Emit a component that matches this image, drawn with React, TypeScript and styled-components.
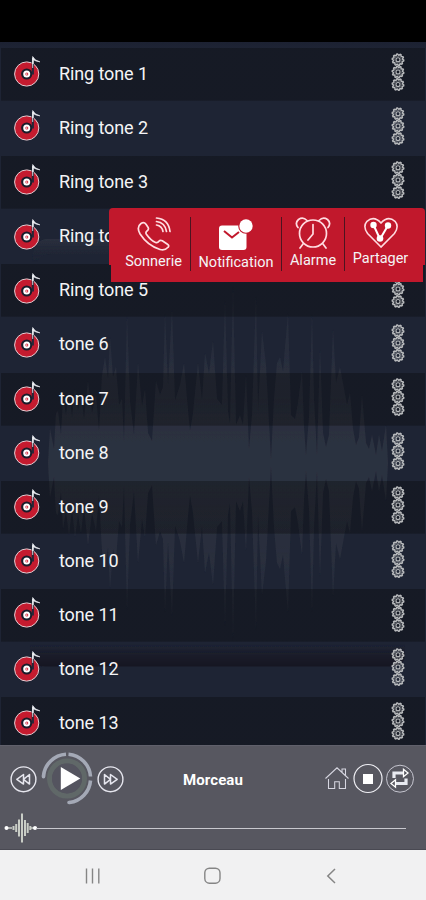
import React from "react";
import styled, { createGlobalStyle } from "styled-components";

const GlobalStyle = createGlobalStyle`
  * { box-sizing: border-box; }
  body { margin: 0; background: #1e2434; font-family: Roboto, "Open Sans", sans-serif; }
`;

const Phone = styled.div`
  display: flex;
  flex-direction: column;
  width: 426px;
  height: 900px;
  overflow: hidden;
  color: #f4f4f6;
`;

const StatusBar = styled.header`
  flex: 0 0 42px;
  background: #000;
`;

const Tones = styled.main`
  position: relative;
  flex: 0 0 703px;
  overflow: hidden;
  padding: 6px 1px 0;
  background: linear-gradient(#1c2132 0, #1e2434 7px);
`;

const Backdrop = styled.svg`
  position: absolute;
  inset: 0;
`;

const ToneList = styled.ul`
  position: relative;
  margin: 0;
  padding: 0;
  list-style: none;
`;

const ToneRow = styled.li<{ $dark: boolean }>`
  display: flex;
  align-items: flex-start;
  height: 54.1px;
  padding: 5.3px 19px 0 11px;
  background: ${(p) =>
    p.$dark
      ? "linear-gradient(rgba(3, 3, 2, 0.3), rgba(3, 3, 2, 0.3)) 0 0 / 100% 52.7px no-repeat"
      : "none"};
`;

const ToneName = styled.span`
  flex: 1;
  margin-left: 15px;
  padding-top: 8.7px;
  font-size: 18px;
  line-height: 24px;
  letter-spacing: -0.1px;
`;

const ActionMenu = styled.nav`
  position: absolute;
  left: 109px;
  top: 166px;
  display: flex;
  width: 316px;
  height: 74px;
  padding-top: 9px;
  border-radius: 4px 4px 0 0;
  background:
    linear-gradient(#c1182c, #c1182c) 0 0 / 316px 57px no-repeat,
    linear-gradient(#c1182c, #c1182c) 2px 0 / 312px 74px no-repeat;
`;

const Action = styled.div<{ $width: number; $inset?: number; $drop?: number }>`
  display: flex;
  flex-direction: column;
  align-items: center;
  width: ${(p) => p.$width}px;
  height: 54px;
  padding-left: ${(p) => p.$inset ?? 0}px;
  & + & { border-left: 1px solid #4c1420; }
  svg { display: block; flex: none; }
  span {
    margin-top: ${(p) => p.$drop ?? 0}px;
    font-size: 14.5px;
    line-height: 18px;
    white-space: nowrap;
  }
`;

const Player = styled.section`
  flex: 0 0 105px;
  background: #575760;
  border-top: 1px solid #60606b;
  border-bottom: 1px solid #494952;
`;

const Controls = styled.div`
  display: flex;
  align-items: center;
  height: 63px;
  padding: 0 11px 0 10px;
`;

const Track = styled.strong`
  flex: 1;
  padding-left: 59px;
  padding-top: 4px;
  font-size: 15px;
  line-height: 20px;
  letter-spacing: 0.1px;
  color: #fff;
`;

const Seek = styled.div`
  display: flex;
  align-items: center;
  height: 38px;
  padding: 0 20px 0 4px;
`;

const SeekLine = styled.div`
  flex: 1;
  height: 1px;
  margin-left: -2px;
  background: #c8c8ce;
`;

const SystemNav = styled.footer`
  display: flex;
  flex: 0 0 50px;
  align-items: center;
  justify-content: space-between;
  padding: 2px 89px 0 84px;
  background: #f1f1f2;
`;

const AMPLITUDES: [number, number][] = [
  [48, 0], [50, 34], [54, 14], [56, 50], [58, 52], [61, 28], [63, 66], [66, 48], [69, 72],
  [72, 46], [75, 74], [78, 52], [81, 70], [84, 44], [88, 82], [92, 50], [96, 68], [99, 32],
  [102, 88], [105, 106], [108, 84], [110, 126], [113, 86], [116, 96], [119, 58], [122, 64],
  [124, 22], [127, 148], [130, 62], [134, 28], [138, 100], [142, 56], [145, 74], [148, 30],
  [152, 22], [156, 82], [160, 68], [163, 76], [165, 150], [168, 78], [172, 154], [175, 62], [180, 78],
  [184, 100], [187, 64], [190, 32], [193, 50], [198, 100], [202, 62], [205, 110], [209, 90],
  [213, 122], [217, 64], [222, 58], [225, 164], [228, 52], [230, 40], [233, 178], [236, 38],
  [240, 48], [243, 38], [246, 88], [249, 14], [252, 48], [256, 168], [258, 52], [262, 132],
  [266, 98], [269, 40], [271, 4], [274, 64], [277, 100], [280, 106], [283, 92], [288, 150],
  [291, 48], [295, 44], [298, 60], [302, 92], [304, 36], [306, 8], [309, 46], [312, 150],
  [314, 64], [317, 8], [320, 114], [323, 30], [326, 16], [329, 28], [333, 134], [336, 80],
  [340, 96], [344, 74], [347, 58], [350, 70], [353, 34], [356, 18], [359, 26], [362, 68],
  [366, 20], [369, 14], [372, 28], [376, 8], [379, 28], [382, 12], [386, 38], [388, 0],
];

const MIDDLE = 421;
const wavePoints = [
  ...AMPLITUDES.map(([x, a]) => `${x},${MIDDLE - a}`),
  ...[...AMPLITUDES].reverse().map(([x, a]) => `${x},${MIDDLE + a}`),
].join(" ");

const PlayerBackdrop = () => (
  <Backdrop width="426" height="703" viewBox="0 0 426 703">
    <defs>
      <linearGradient id="wave" x1="0" y1="243" x2="0" y2="599" gradientUnits="userSpaceOnUse">
        <stop offset="0" stopColor="#2e3442" stopOpacity=".4" />
        <stop offset=".36" stopColor="#2c313f" stopOpacity=".85" />
        <stop offset=".44" stopColor="#2c313f" />
        <stop offset=".56" stopColor="#2c313f" />
        <stop offset=".66" stopColor="#2c313f" stopOpacity=".85" />
        <stop offset="1" stopColor="#2e3442" stopOpacity=".4" />
      </linearGradient>
      <linearGradient id="edge" x1="0" y1="0" x2="0" y2="1">
        <stop offset="0" stopColor="#2b303e" />
        <stop offset="1" stopColor="#1e2434" stopOpacity="0" />
      </linearGradient>
      <linearGradient id="shade" x1="0" y1="0" x2="0" y2="1">
        <stop offset="0" stopColor="#171925" stopOpacity="0" />
        <stop offset=".5" stopColor="#181a26" stopOpacity=".8" />
        <stop offset="1" stopColor="#141620" />
      </linearGradient>
      <filter id="soften"><feGaussianBlur stdDeviation=".7" /></filter>
    </defs>
    <path d="M32 220Q33 197 48 197H150V212H52Q38 212 38 220Z" fill="url(#edge)" filter="url(#soften)" />
    <polygon points={wavePoints} fill="url(#wave)" filter="url(#soften)" />
    <path d="M30 602H405V613Q405 624.500 390 624.500H45Q30 624.500 30 611Z" fill="url(#shade)" filter="url(#soften)" />
  </Backdrop>
);

const DiscIcon = () => (
  <svg width="32" height="38" viewBox="0 0 32 38">
    <circle cx="14.700" cy="21" r="12.100" fill="#c51b2f" stroke="#e6cdd2" strokeWidth="1" />
    <circle cx="14.700" cy="21" r="5.600" fill="#191c2a" />
    <path d="M20.800 5V21.500" stroke="#242838" strokeWidth="2.200" />
    <path d="M20.700 15V3.600q2.100 4.200 7.100 5.200-4.600-.7-6.300-2.100" fill="#fff" stroke="#e5e7ed" strokeWidth=".8" />
    <path d="M20.900 5V11" stroke="#edf0f3" strokeWidth="1.400" />
    <circle cx="14.700" cy="21" r="3.500" fill="#fff" />
    <circle cx="14.800" cy="21" r="1.500" fill="#d52d40" />
    <path d="m14.200 20.200 1.500.8-1.500.9Z" fill="#fff" />
  </svg>
);

const gearPath = (() => {
  const pts: string[] = [];
  for (let i = 0; i < 40; i++) {
    const r = i % 4 < 2 ? 5.8 : 4.7;
    const a = ((i + 0.5) / 40) * Math.PI * 2;
    pts.push(`${(Math.cos(a) * r).toFixed(2)} ${(Math.sin(a) * r).toFixed(2)}`);
  }
  return `M${pts.join("L")}Z`;
})();

const GearStack = () => (
  <svg width="16" height="44" viewBox="-8 0 16 44">
    {[6.7, 19, 31.5].map((y) => (
      <g key={y} transform={`translate(0 ${y})`} fill="none" stroke="#b8babc">
        <path d={gearPath} strokeWidth="1.450" />
        <circle r="3.400" strokeWidth=".4" />
        <circle r="2" strokeWidth="1.100" />
      </g>
    ))}
  </svg>
);

const PhoneIcon = () => (
  <svg width="36" height="35" viewBox="0 0 36 35" fill="none" stroke="#ffdde1" strokeWidth="1.700" strokeLinejoin="round" strokeLinecap="round">
    <path d="M5 6.500q3-2 5 .8l2 3q1.300 2-1 3.700-1.800 1.400-.6 3.300 4.300 6.200 9.200 8.200 2 .8 3.300-1.200 1.300-1.700 3.400-.5l5.200 3.400q2.100 1.400.5 3.100Q28.800 34 24 32.500 11.500 28.500 4.100 17 .1 10.100 5 6.500Z" />
    <path d="M20.500 8q5.500 1 6.500 6.500M20.500 4.500q8.500 1 10 10M20.500 1q12 1 13.500 13.500" />
  </svg>
);

const MailIcon = () => (
  <svg width="36" height="35" viewBox="0 0 36 35">
    <rect x="1" y="8.500" width="27.500" height="24.500" rx="3" fill="#fff" />
    <path d="m6 14 8 6.500 7-5.500" fill="none" stroke="#c1182c" strokeWidth="2" />
    <circle cx="28" cy="9" r="7.800" fill="#c1182c" />
    <circle cx="28" cy="9" r="6.700" fill="#fff" />
  </svg>
);

const AlarmIcon = () => (
  <svg width="36" height="33" viewBox="0 0 36 33" fill="none" stroke="#ffdce1" strokeWidth="1.700" strokeLinecap="round">
    <circle cx="18" cy="16.500" r="13.500" />
    <path d="M3 10.500Q-.5 6 3.500 2.500 8-.5 12 3.500M33 10.500q3.500-4.500-.5-8Q28-.5 24 3.500M8 27l-3 4M28 27l3 4M18 7.500V17l-5 6" />
  </svg>
);

const ShareHeartIcon = () => (
  <svg width="36" height="32" viewBox="0 0 36 32" fill="none">
    <path d="M18 30 4.600 16.500Q-.5 9.600 4 4.300 11-1.700 18 6q7-7.700 14-1.700 4.500 5.300-.6 12.200Z" stroke="#ffdce1" strokeWidth="1.600" />
    <path d="m10.500 8 6.500 14L25 8.500" stroke="#fff" strokeWidth="2" />
    <g fill="#fff"><circle cx="10.500" cy="8" r="3.200" /><circle cx="25" cy="8.500" r="3.200" /><circle cx="17" cy="21.500" r="3.300" /></g>
  </svg>
);

const SkipIcon = ({ forward = false }: { forward?: boolean }) => (
  <svg width="27" height="30" viewBox="0 0 27 30" fill="none" stroke="#e6e6ee" strokeLinejoin="round">
    <circle cx="13.500" cy="16.300" r="12.400" strokeWidth="1.400" />
    <g transform={forward ? "translate(0 .3)" : "matrix(-1 0 0 1 27 .3)"} strokeWidth="1.500">
      <path d="M7.500 11.200v9.600l6-4.800ZM13.500 11.200v9.600l6.700-4.800Z" />
    </g>
  </svg>
);

const PlayIcon = () => (
  <svg width="60" height="60" viewBox="0 0 60 60" fill="none">
    <circle cx="30" cy="30.500" r="17.500" stroke="#606868" strokeWidth="5" />
    <circle cx="30" cy="30.500" r="15" fill="#54545f" />
    <g stroke="#a4a9b6" strokeWidth="3.600" strokeLinecap="round">
      <path d="M6.500 28A24 24 0 0 1 29 6.200M31.500 6.200A24 24 0 0 1 53.500 28.500M53.500 32.500A24 24 0 0 1 32.500 54.500" strokeLinecap="butt" />
      <path d="M6.500 28v.7M32.500 54.500h-.5" />
    </g>
    <path d="M23.800 19v23l19.500-11.500Z" fill="#fff" />
  </svg>
);

const HomeIcon = () => (
  <svg width="28" height="26" viewBox="0 0 28 26" fill="none" stroke="#d6d6e0" strokeWidth="1.050">
    <path d="M1.500 13.500 13 2.800l11.500 10.700M18 7V4h3.500v6.500M4.500 14v9.500h6.200v-6.700h4.600v6.700h6.200V14" />
  </svg>
);

const StopIcon = () => (
  <svg width="33" height="32" viewBox="0 0 33 32">
    <circle cx="16" cy="16.500" r="14" fill="none" stroke="#efeff4" strokeWidth="1.200" />
    <rect x="11" y="12" width="10" height="10" fill="#fff" />
  </svg>
);

const RepeatIcon = () => (
  <svg width="30" height="32" viewBox="0 0 30 32">
    <circle cx="15" cy="16.700" r="13.500" fill="none" stroke="#c5c5cf" strokeWidth="1" />
    <path d="M9 16V11h10M21 16.500V21.500H10" fill="none" stroke="#e8eaf1" strokeWidth="3.200" />
    <path d="m18.500 7.300 4.500 3.700-4.500 3.700ZM10.500 17.800l-4.500 3.700 4.500 3.700Z" fill="#575760" stroke="#fff" strokeWidth="1.300" />
  </svg>
);

const SeekThumb = () => (
  <svg width="34" height="32" viewBox="0 0 34 32" stroke="#c9cdc6" strokeWidth="2">
    <path d="M1 16h7M27 16h6" strokeWidth="1.500" />
    <path d="M9.500 14v4M12.200 12v8M15 7.500v17M18 1.500v29M21 8v16M23.700 11v10M26.300 14v4" />
    <g fill="#fff" stroke="none"><circle cx="2.500" cy="16" r="2" /><circle cx="31" cy="16" r="2" /></g>
  </svg>
);

const RecentsIcon = () => (
  <svg width="17" height="18" viewBox="0 0 17 18" stroke="#858585" strokeWidth="1.400">
    <path d="M2.500 1.500v15M8.500 1.500v15M14.800 1.500v15" />
  </svg>
);

const HomeKeyIcon = () => (
  <svg width="18" height="18" viewBox="0 0 18 18">
    <rect x=".8" y="1.200" width="15.200" height="15" rx="4.600" fill="none" stroke="#858585" strokeWidth="1.400" />
  </svg>
);

const BackIcon = () => (
  <svg width="12" height="18" viewBox="0 0 12 18">
    <path d="M10 2 2.800 9l7.200 7" fill="none" stroke="#858585" strokeWidth="1.500" />
  </svg>
);

const tones = Array.from({ length: 13 }, (_, i) => (i < 5 ? `Ring tone ${i + 1}` : `tone ${i + 1}`));

export default function App() {
  return (
    <>
      <GlobalStyle />
      <Phone>
        <StatusBar />
        <Tones>
          <PlayerBackdrop />
          <ToneList>
            {tones.map((name, i) => (
              <ToneRow key={name} $dark={i % 2 === 0}>
                <DiscIcon />
                <ToneName>{name}</ToneName>
                <GearStack />
              </ToneRow>
            ))}
          </ToneList>
          <ActionMenu>
            <Action $width={81} $inset={8} $drop={1}><PhoneIcon /><span>Sonnerie</span></Action>
            <Action $width={91} $drop={2}><MailIcon /><span>Notification</span></Action>
            <Action $width={63} $drop={2}><AlarmIcon /><span>Alarme</span></Action>
            <Action $width={72} $drop={1}><ShareHeartIcon /><span>Partager</span></Action>
          </ActionMenu>
        </Tones>
        <Player>
          <Controls>
            <SkipIcon />
            <PlayIcon />
            <SkipIcon forward />
            <Track>Morceau</Track>
            <HomeIcon />
            <StopIcon />
            <RepeatIcon />
          </Controls>
          <Seek>
            <SeekThumb />
            <SeekLine />
          </Seek>
        </Player>
        <SystemNav>
          <RecentsIcon />
          <HomeKeyIcon />
          <BackIcon />
        </SystemNav>
      </Phone>
    </>
  );
}
